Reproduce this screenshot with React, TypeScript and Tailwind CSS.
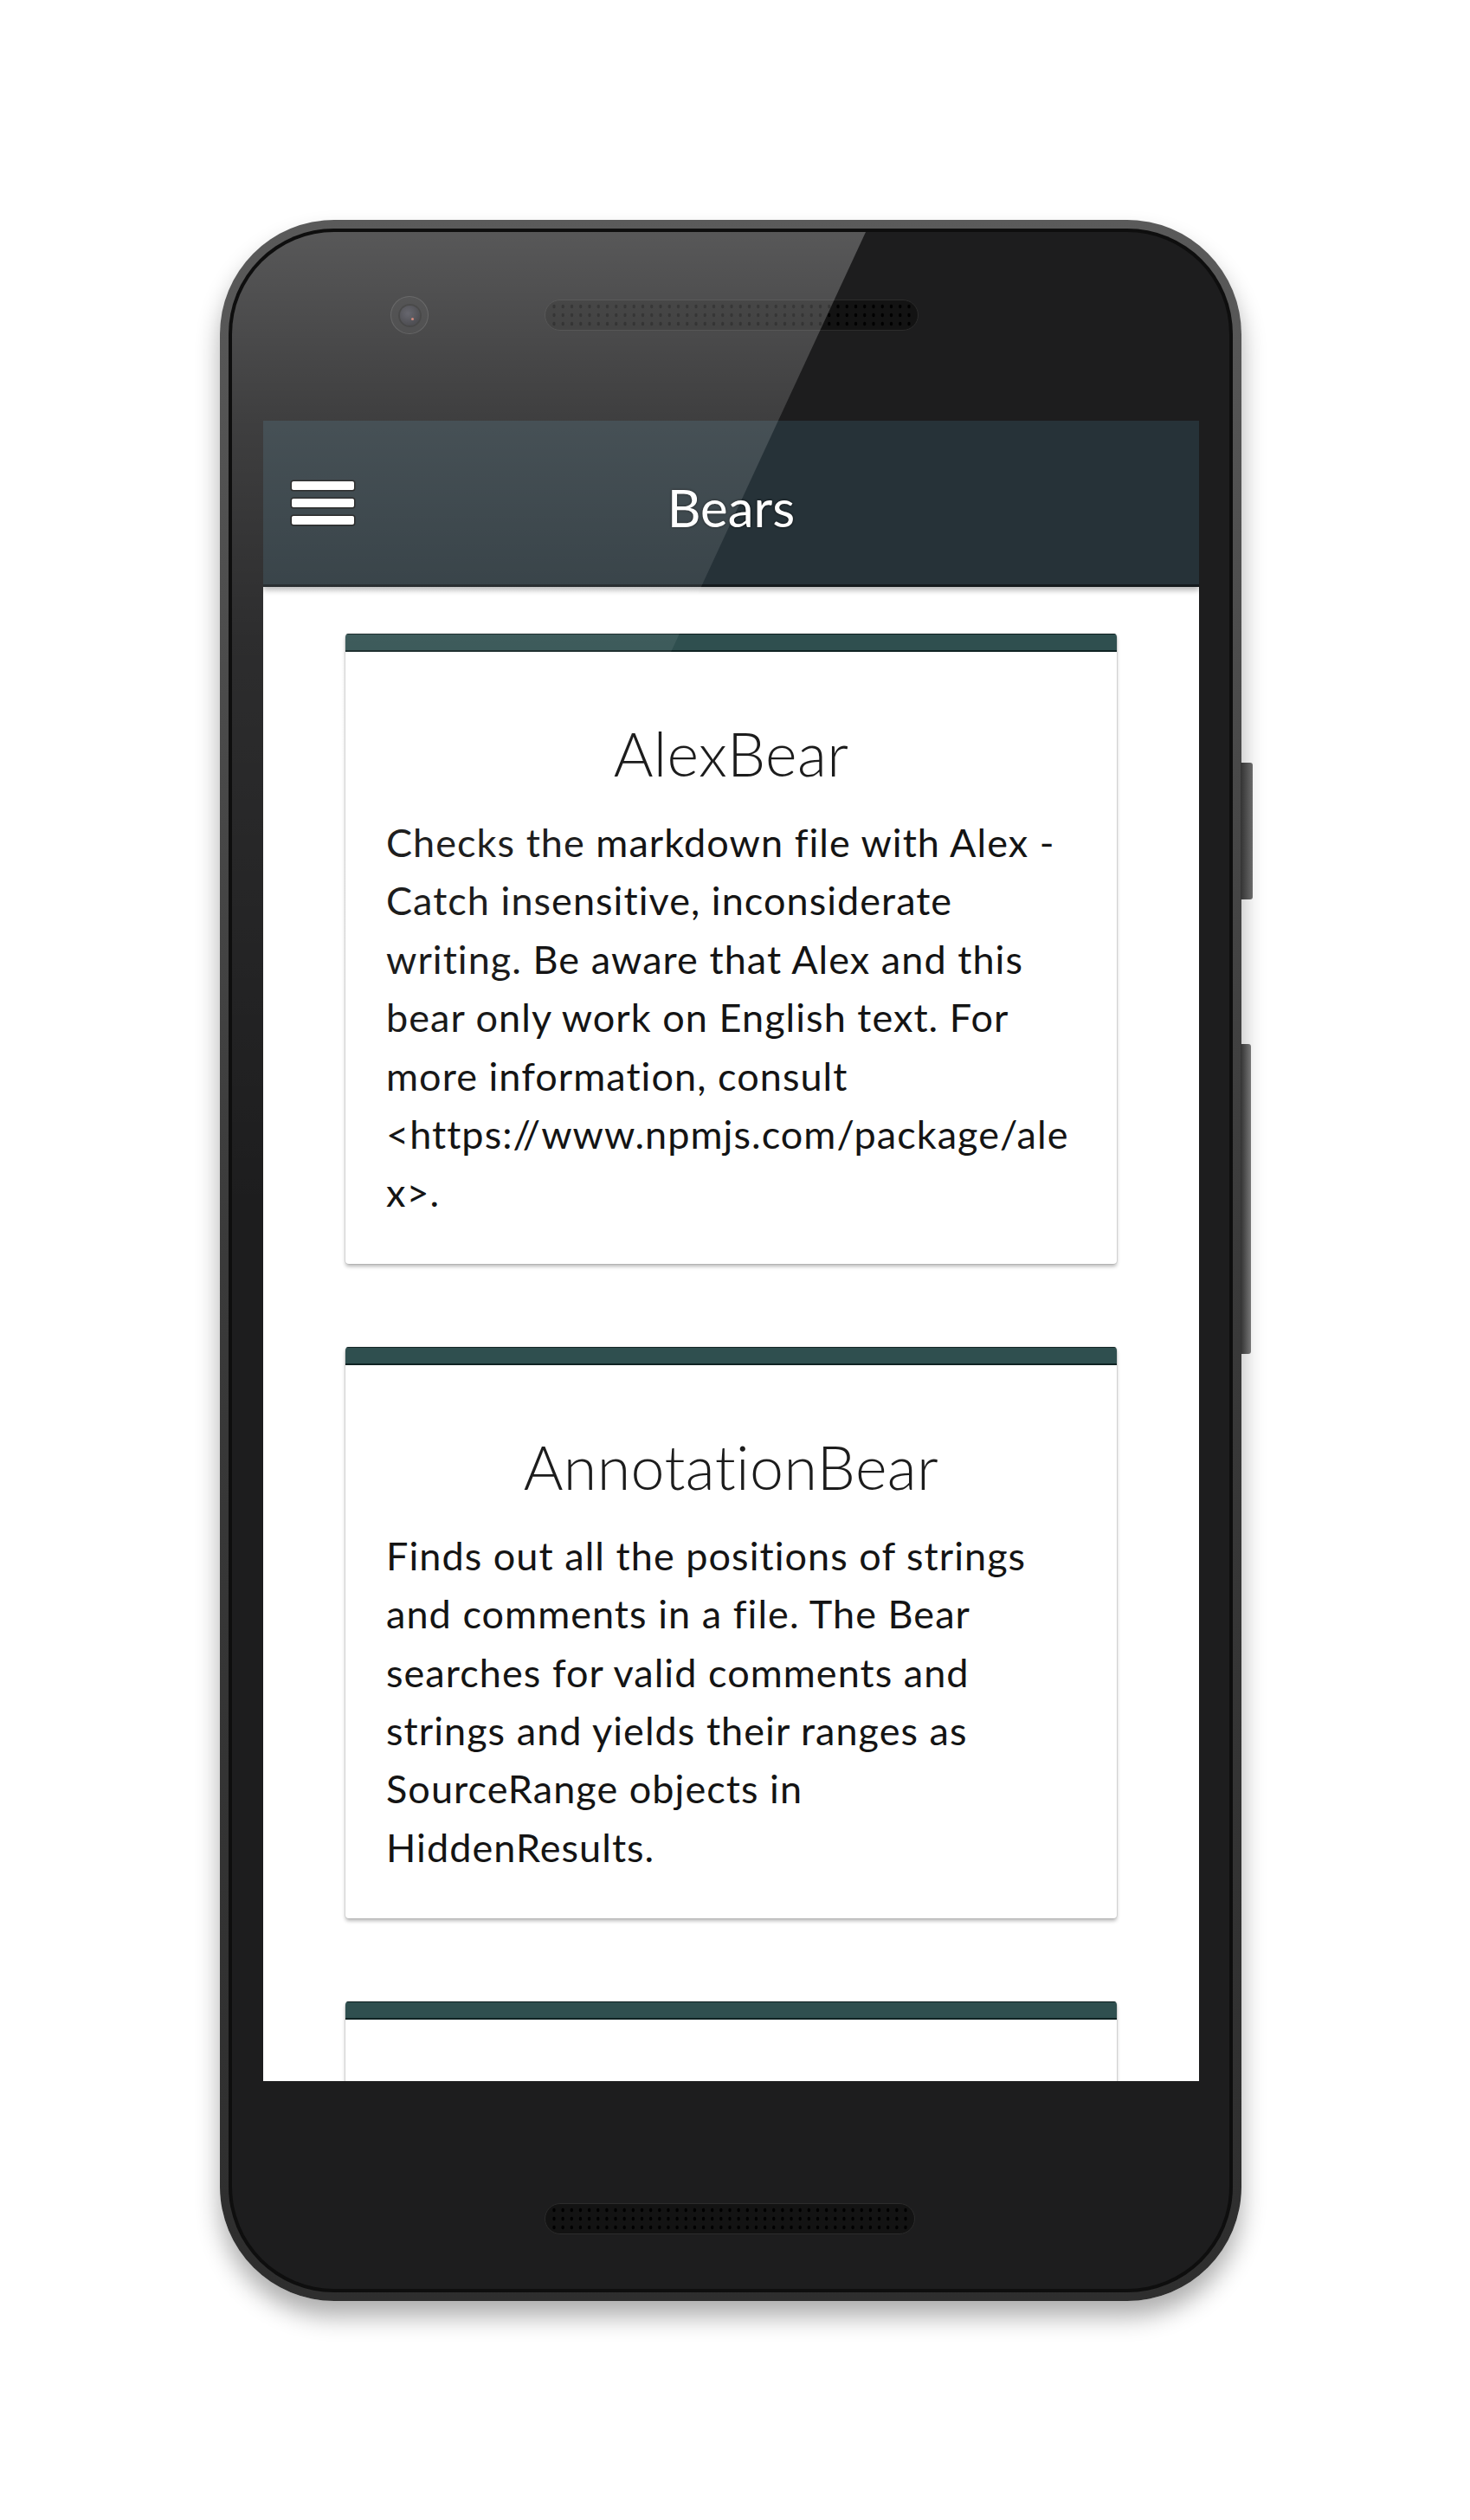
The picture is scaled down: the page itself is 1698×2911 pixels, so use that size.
import React from "react";

const bears = [
  {
    title: "AlexBear",
    body: "Checks the markdown file with Alex - Catch insensitive, inconsiderate writing. Be aware that Alex and this bear only work on English text. For more information, consult <https://www.npmjs.com/package/alex>.",
  },
  {
    title: "AnnotationBear",
    body: "Finds out all the positions of strings and comments in a file. The Bear searches for valid comments and strings and yields their ranges as SourceRange objects in HiddenResults.",
  },
];

function SpeakerGrill({ width }: { width: number }) {
  const cols = 41;
  const step = (width - 22) / (cols - 1);
  return (
    <svg width={width} height={36} viewBox={`0 0 ${width} 36`}>
      <rect x={0.5} y={0.5} width={width - 1} height={35} rx={17.5} fill="#131313" stroke="#2c2c2c" />
      {[8, 18, 28].map((y) =>
        Array.from({ length: cols }).map((_, i) => (
          <ellipse key={`${y}-${i}`} cx={11 + i * step} cy={y} rx={1.7} ry={2.2} fill="#000" />
        ))
      )}
    </svg>
  );
}

function Camera() {
  return (
    <div className="flex h-[44px] w-[44px] items-center justify-center rounded-full border border-[rgba(255,255,255,0.12)] bg-[rgba(255,255,255,0.04)]">
      <div className="relative h-[23px] w-[23px] rounded-full bg-[radial-gradient(circle_at_40%_40%,#3e3e48,#141418)] shadow-[0_0_0_2px_rgba(0,0,0,0.35)]">
        <div className="absolute left-[13px] top-[14px] h-[3px] w-[3px] rounded-full bg-[#c86a5a]" />
      </div>
    </div>
  );
}

function BearCard({ title, body }: { title?: string; body?: string }) {
  return (
    <div className="w-[891px] shrink-0 overflow-hidden rounded-[4px] bg-white shadow-[0_0_0_1px_rgba(0,0,0,0.07),0_3px_4px_rgba(0,0,0,0.28)]">
      <div className="h-[21px] border-t border-b-2 border-[#0f2222] bg-[#2f4f4f]" />
      {title ? (
        <>
          <h2 className="mt-[75px] mb-[28px] text-center text-[70px] font-light leading-[84px] tracking-[0.4px] text-[#1c1c1c] [font-variant-ligatures:none]">
            {title}
          </h2>
          <p className="px-[47px] pb-[48px] text-[45px] leading-[67.4px] tracking-[1.05px] text-[#141414] break-words">
            {body}
          </p>
        </>
      ) : (
        <div className="h-[400px]" />
      )}
    </div>
  );
}

export default function App() {
  return (
    <div className="min-h-[2911px] bg-white pl-[254px] pt-[254px] font-[Lato,sans-serif]">
      <div className="relative h-[2404px] w-[1180px]">
        {/* side buttons */}
        <div className="absolute right-[-13px] top-[627px] h-[158px] w-[14px] rounded-r-[3px] bg-linear-to-r from-[#333] to-[#6b6b6b]" />
        <div className="absolute right-[-11px] top-[952px] h-[358px] w-[12px] rounded-r-[3px] bg-linear-to-r from-[#333] to-[#777]" />

        <div className="h-full rounded-[132px] bg-linear-to-b from-[#5a5a5a] via-[#3a3a3a] to-[#2e2e2e] p-[10px] shadow-[0_18px_28px_rgba(0,0,0,0.32)]">
          <div className="h-full rounded-[122px] bg-[#0e0e0e] p-[4px]">
            <div className="relative flex h-full flex-col overflow-hidden rounded-[118px] bg-[#1d1d1e]">
              {/* top bezel */}
              <div className="flex h-[218px] shrink-0 items-center gap-[134px] self-start pb-[89px] pl-[183px] pt-[63px]">
                <Camera />
                <SpeakerGrill width={432} />
              </div>

              {/* screen */}
              <div className="ml-[36px] mr-[35px] flex h-[1918px] shrink-0 flex-col overflow-hidden bg-white">
                <header className="relative z-10 grid h-[192px] shrink-0 grid-cols-[1fr_auto_1fr] items-center border-b-[3px] border-[#151a1d] bg-[#263238] shadow-[0_4px_6px_rgba(0,0,0,0.28)]">
                  <div className="flex flex-col gap-[10px] pl-[33px]">
                    <span className="h-[10px] w-[72px] rounded-[2px] bg-white shadow-[0_0_0_1.5px_#111]" />
                    <span className="h-[10px] w-[72px] rounded-[2px] bg-white shadow-[0_0_0_1.5px_#111]" />
                    <span className="h-[10px] w-[72px] rounded-[2px] bg-white shadow-[0_0_0_1.5px_#111]" />
                  </div>
                  <h1 className="pt-[10px] text-[60px] leading-[72px] text-white [text-shadow:0_0_3px_rgba(0,0,0,0.9)]">
                    Bears
                  </h1>
                  <div />
                </header>
                <div className="flex flex-col items-center gap-[96px] pt-[54px]">
                  {bears.map((b) => (
                    <BearCard key={b.title} title={b.title} body={b.body} />
                  ))}
                  <BearCard />
                </div>
              </div>

              {/* bottom bezel */}
              <div className="flex h-[240px] shrink-0 pl-[361px] pt-[141px]">
                <SpeakerGrill width={428} />
              </div>

              {/* glass glare */}
              <svg
                className="pointer-events-none absolute left-0 top-0 z-20"
                width={1152}
                height={2376}
                viewBox="0 0 1152 2376"
              >
                <defs>
                  <linearGradient id="glare" x1="0" y1="0" x2="0" y2="1132" gradientUnits="userSpaceOnUse">
                    <stop offset="0" stopColor="#fff" stopOpacity="0.26" />
                    <stop offset="0.19" stopColor="#fff" stopOpacity="0.15" />
                    <stop offset="0.42" stopColor="#fff" stopOpacity="0.07" />
                    <stop offset="1" stopColor="#fff" stopOpacity="0" />
                  </linearGradient>
                </defs>
                <polygon points="0,0 732,0 207,1132 0,1132" fill="url(#glare)" />
              </svg>
            </div>
          </div>
        </div>
      </div>
    </div>
  );
}
